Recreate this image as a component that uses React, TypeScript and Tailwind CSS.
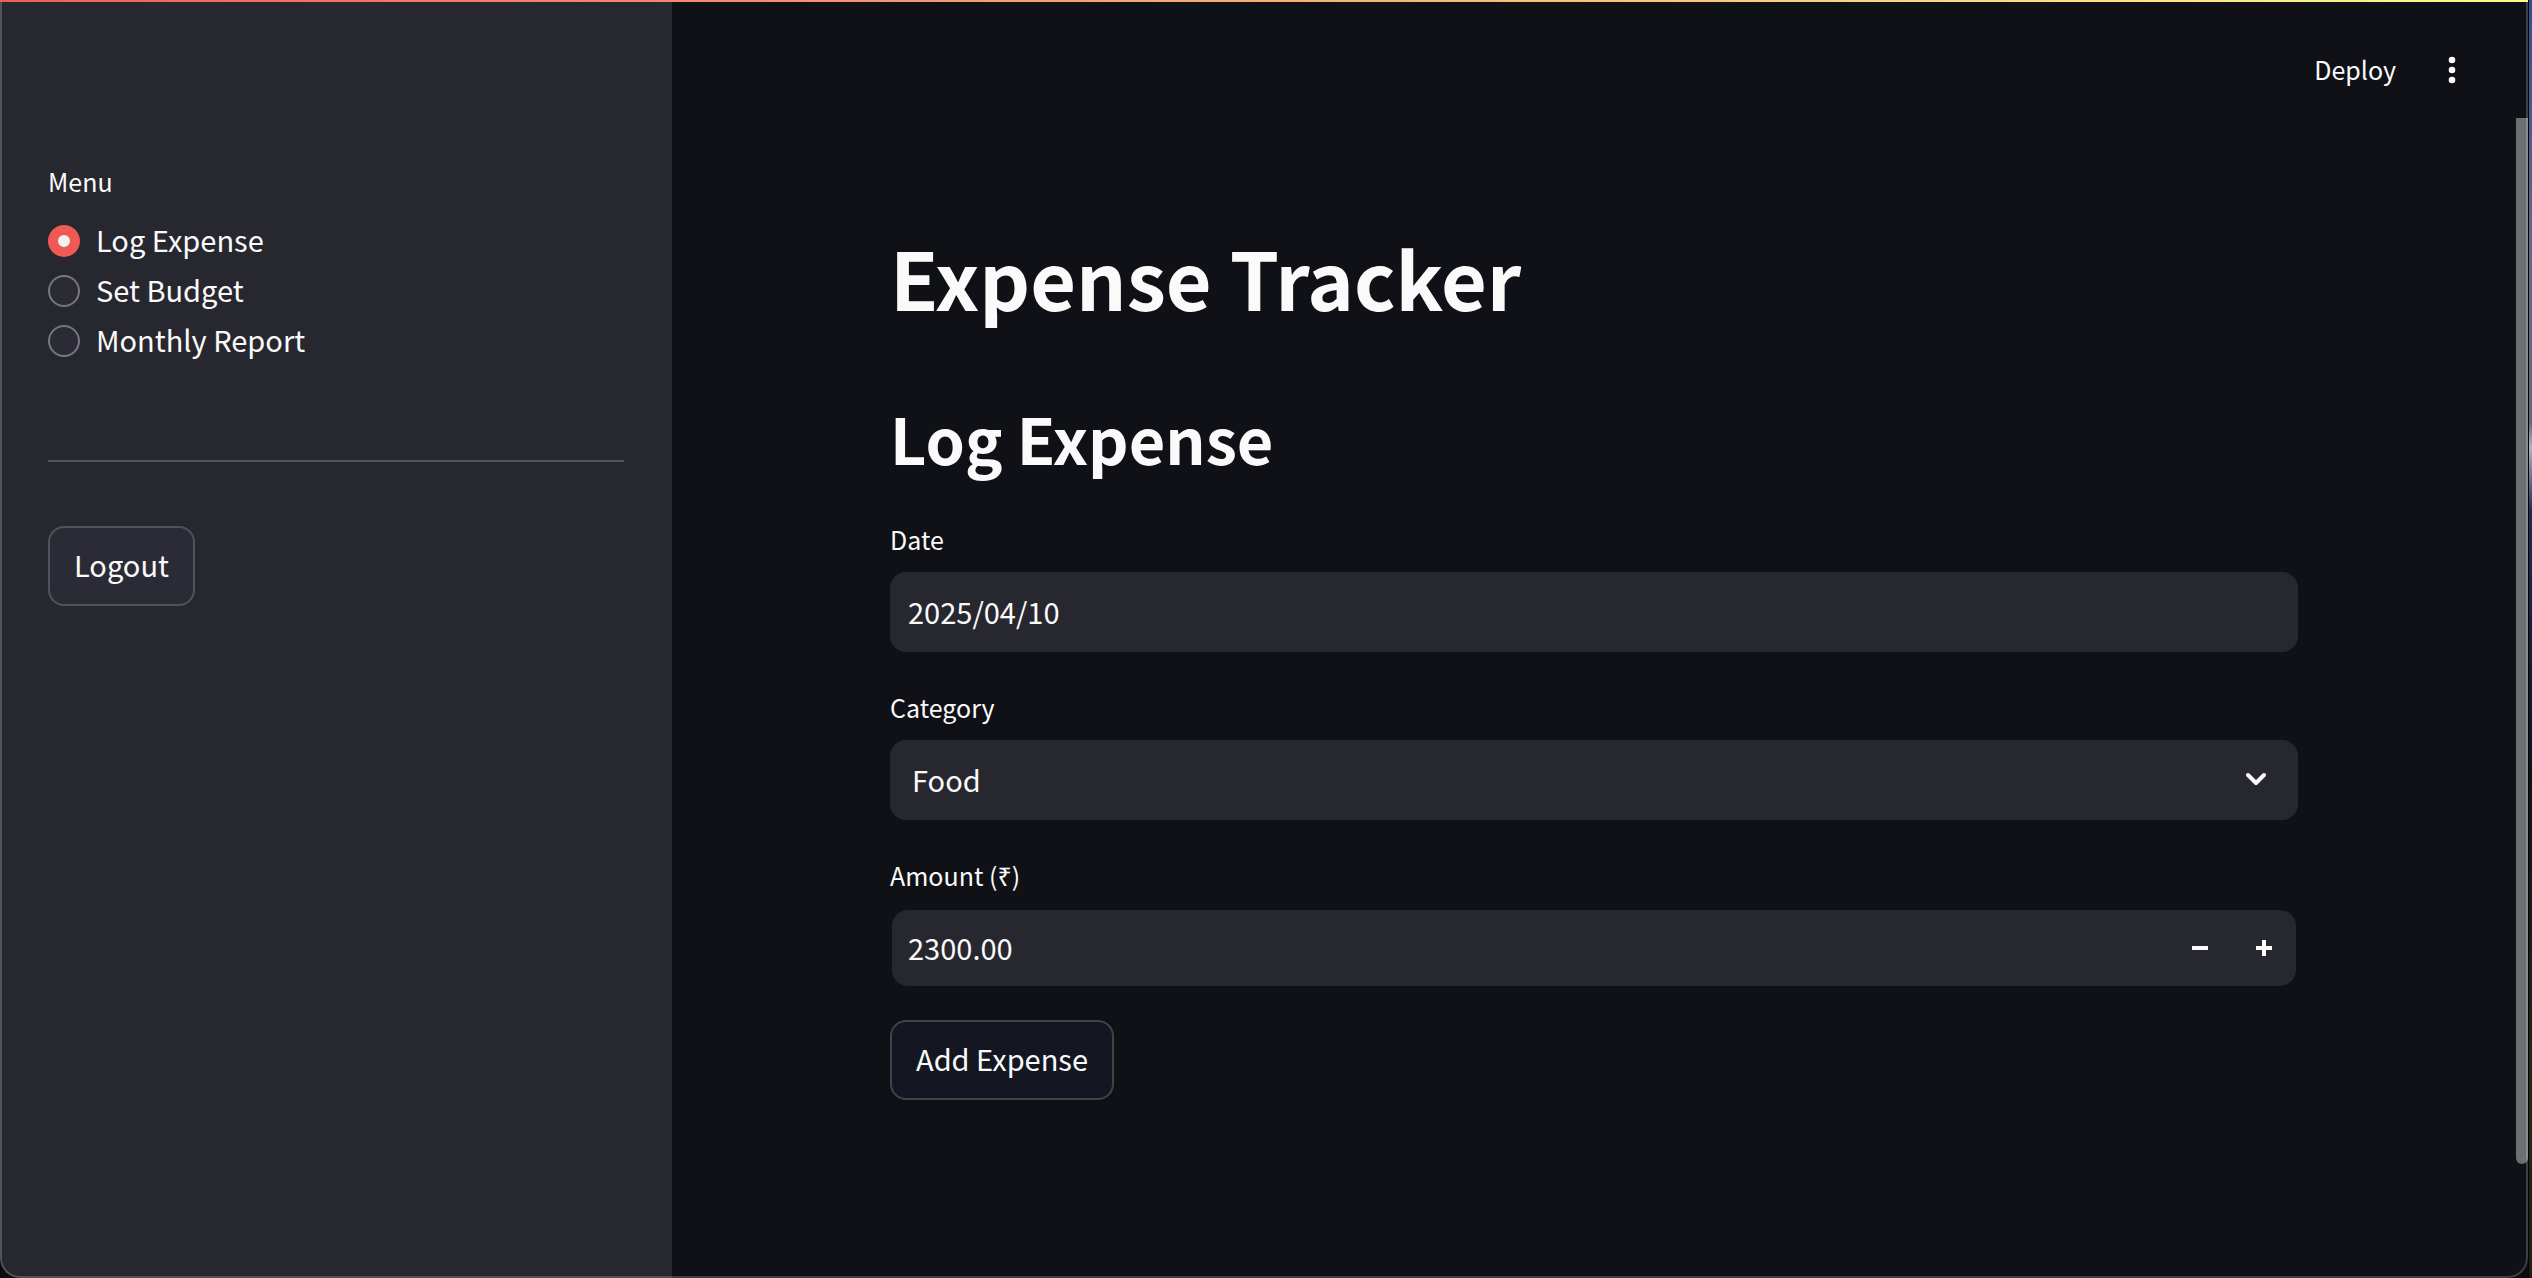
import { useState, type ReactNode } from "react";

const PAGES = ["Log Expense", "Set Budget", "Monthly Report"];
const CATEGORIES = ["Food", "Transport", "Rent", "Utilities", "Other"];

function MenuOption({ label, checked, onSelect }: { label: string; checked: boolean; onSelect: () => void }) {
  return (
    <label className="flex h-[50px] cursor-pointer items-center gap-4">
      <input
        type="radio"
        name="menu"
        checked={checked}
        onChange={onSelect}
        className="size-8 shrink-0 appearance-none rounded-full border-2 border-[#77777d] bg-[#2b2b36] checked:border-[10px] checked:border-[#ef5a54] checked:bg-[#f0f2f6]"
      />
      <span className="pb-1 text-[29px] leading-9">{label}</span>
    </label>
  );
}

function Sidebar() {
  const [page, setPage] = useState(PAGES[0]);
  return (
    <aside className="w-[672px] shrink-0 bg-[#272730] px-12 pt-[163px]">
      <fieldset>
        <legend className="mb-[17px] text-[25px] leading-9">Menu</legend>
        {PAGES.map((name) => (
          <MenuOption key={name} label={name} checked={page === name} onSelect={() => setPage(name)} />
        ))}
      </fieldset>
      <hr className="mt-[94px] mb-16 border-t-2 border-[#525259]" />
      <button
        type="button"
        className="h-20 rounded-2xl border-2 border-[#525259] bg-[#2b2b36] px-6 pb-1 text-[29px] leading-9"
      >
        Logout
      </button>
    </aside>
  );
}

function Field({ id, label, children }: { id: string; label: string; children: ReactNode }) {
  return (
    <div className="flex flex-col gap-[15px]">
      <label htmlFor={id} className="text-[25px] leading-9">
        {label}
      </label>
      {children}
    </div>
  );
}

function ExpenseForm() {
  const [date, setDate] = useState("2025/04/10");
  const [category, setCategory] = useState("Food");
  const [amount, setAmount] = useState("2300.00");
  const step = (delta: number) => setAmount((Number(amount) + delta).toFixed(2));

  return (
    <form onSubmit={(e) => e.preventDefault()}>
      <div className="flex flex-col gap-[37px]">
        <Field id="date" label="Date">
          <input
            id="date"
            type="text"
            value={date}
            onChange={(e) => setDate(e.target.value)}
            className="h-20 w-full rounded-2xl bg-[#272730] px-[18px] pb-0.5 text-[29px] leading-9 outline-none"
          />
        </Field>
        <Field id="category" label="Category">
          <div className="relative">
            <select
              id="category"
              value={category}
              onChange={(e) => setCategory(e.target.value)}
              className="h-20 w-full appearance-none rounded-2xl bg-[#272730] px-[22px] pb-0.5 text-[29px] leading-9 outline-none"
            >
              {CATEGORIES.map((c) => (
                <option key={c}>{c}</option>
              ))}
            </select>
            <svg
              viewBox="0 0 32 32"
              className="pointer-events-none absolute top-[23px] right-[26px] size-8"
              fill="none"
              stroke="currentColor"
              strokeWidth="4"
              strokeLinecap="round"
              strokeLinejoin="round"
              aria-hidden="true"
            >
              <path d="M8 12l8 8 8-8" />
            </svg>
          </div>
        </Field>
        <Field id="amount" label="Amount (₹)">
          <div className="p-0.5">
            <div className="flex h-[76px] overflow-hidden rounded-2xl bg-[#272730]">
              <input
                id="amount"
                type="text"
                inputMode="decimal"
                value={amount}
                onChange={(e) => setAmount(e.target.value)}
                className="min-w-0 flex-1 px-4 pb-0.5 text-[29px] leading-9 outline-none"
              />
              <button
                type="button"
                aria-label="Decrease amount"
                onClick={() => step(-1)}
                className="flex w-16 items-center justify-center"
              >
                <svg viewBox="0 0 16 16" className="size-4" fill="currentColor" aria-hidden="true">
                  <path d="M0 6h16v4H0z" />
                </svg>
              </button>
              <button
                type="button"
                aria-label="Increase amount"
                onClick={() => step(1)}
                className="flex w-16 items-center justify-center"
              >
                <svg viewBox="0 0 16 16" className="size-4" fill="currentColor" aria-hidden="true">
                  <path d="M6 0h4v6h6v4h-6v6H6v-6H0V6h6z" />
                </svg>
              </button>
            </div>
          </div>
        </Field>
      </div>
      <button
        type="submit"
        className="mt-8 h-20 rounded-2xl border-2 border-[#42434a] bg-[#141721] px-6 pb-1 text-[29px] leading-9"
      >
        Add Expense
      </button>
    </form>
  );
}

export default function App() {
  return (
    <div className="flex min-h-screen bg-[#0b0c10] font-['Noto_Sans_CJK_SC','Noto_Sans',sans-serif] text-[#fafafa]">
      <div className="relative flex min-w-0 flex-1 overflow-hidden rounded-b-[20px] bg-[#101116]">
        <Sidebar />
        <div className="relative min-w-0 flex-1">
          <header className="absolute inset-x-0 top-0 flex h-[116px] items-center justify-end gap-9 pt-6 pr-11">
            <button type="button" className="pb-0.5 text-[25px] leading-9">
              Deploy
            </button>
            <button type="button" aria-label="Main menu" className="flex size-10 items-center justify-center">
              <svg viewBox="0 0 32 32" className="size-8" fill="currentColor" aria-hidden="true">
                <circle cx="16" cy="6" r="3.3" />
                <circle cx="16" cy="16" r="3.3" />
                <circle cx="16" cy="26" r="3.3" />
              </svg>
            </button>
          </header>
          <main className="mx-auto max-w-[1408px] pt-56">
            <h1 className="mb-16 text-[79px] leading-[106px] font-bold">Expense Tracker</h1>
            <h2 className="mb-[39px] text-[63px] leading-[88px] font-bold">Log Expense</h2>
            <ExpenseForm />
          </main>
        </div>
        <div className="w-3 shrink-0 pt-[118px]">
          <div className="h-[1046px] rounded-b-full bg-[#6d6e71]" />
        </div>
        <div className="pointer-events-none absolute inset-0 rounded-b-[20px] border-x-2 border-b-2 border-white/20" />
        <div className="absolute inset-x-0 top-0 h-0.5 bg-linear-to-r/srgb from-[#f0605a] to-[#fdfd90]" />
      </div>
      <div className="w-1 shrink-0 border-l border-black bg-[linear-gradient(#2f4f8f,#646a85_20%,#5f6680_33%,#aab4c4_35%,#1c2c55_40%,#0c141c_60%,#22261a_85%,#1c1f18)]" />
    </div>
  );
}
